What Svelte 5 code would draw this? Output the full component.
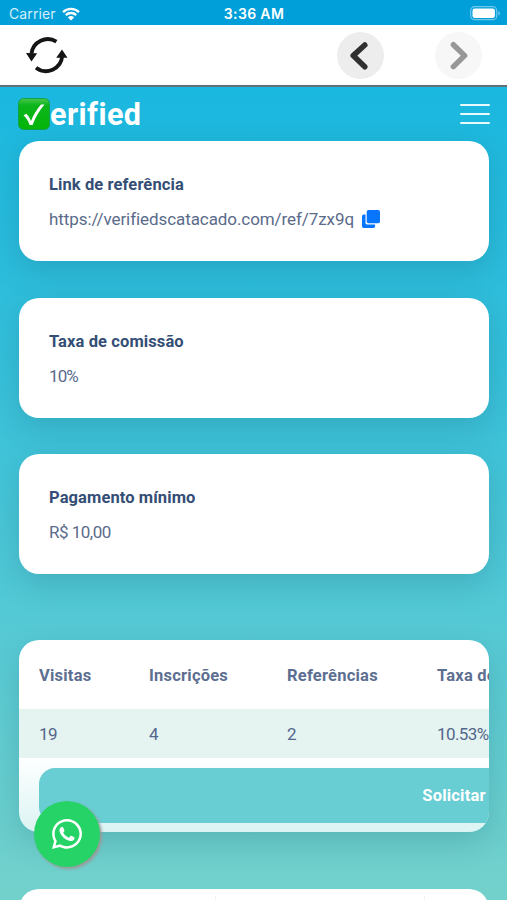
<script lang="ts">
  const cards = [
    { title: 'Link de referência', value: 'https://verifiedscatacado.com/ref/7zx9q', kind: 'link' },
    { title: 'Taxa de comissão', value: '10%', kind: 'rate' },
    { title: 'Pagamento mínimo', value: 'R$ 10,00', kind: 'money' }
  ];
  const columns = ['Visitas', 'Inscrições', 'Referências', 'Taxa de'];
  const stats = ['19', '4', '2', '10.53%'];
</script>

<div class="screen">
  <div class="status">
    <div class="carrier">
      <span>Carrier</span>
      <svg width="18" height="14" viewBox="0 0 18 14">
        <path d="M1 5.2a11.5 11.5 0 0 1 16 0M3.8 8.1a7.5 7.5 0 0 1 10.4 0" fill="none" stroke="#fff" stroke-width="2.3" />
        <path d="M5.9 10.4a4.4 4.4 0 0 1 6.2 0L9 13.6z" fill="#fff" />
      </svg>
    </div>
    <div class="time">3:36 AM</div>
    <svg class="battery" width="31" height="15" viewBox="0 0 31 15">
      <rect x=".7" y=".7" width="26" height="13" rx="3.8" fill="none" stroke="#71c7eb" stroke-width="1.2" />
      <rect x="2.5" y="2.5" width="22.4" height="9.4" rx="2.2" fill="#fff" />
      <path d="M28.3 5v4.5q1.6-.6 1.6-2.25T28.3 5z" fill="#71c7eb" />
    </svg>
  </div>

  <div class="toolbar">
    <button class="reload" aria-label="Recarregar">
      <svg width="42" height="38" viewBox="0 0 42 38">
        <path d="M30.400 5.600A16.400 16.400 0 0 0 5.500 17.500" fill="none" stroke="#151515" stroke-width="3.8" />
        <path d="M10 31.800A16.400 16.400 0 0 0 36.200 20" fill="none" stroke="#151515" stroke-width="3.8" />
        <path d="M0 16.900l11.200.3-5.700 8.300zM41.500 21.800l-11.300-.1 5.800-8.300z" fill="#151515" />
      </svg>
    </button>
    <button class="nav" aria-label="Voltar">
      <svg width="47" height="47" viewBox="0 0 47 47"><path d="M27.800 13L16.200 23.600l11.600 11.200" /></svg>
    </button>
    <button class="nav off" aria-label="Avançar">
      <svg width="47" height="47" viewBox="0 0 47 47"><path d="M18.400 12.700l11.200 10.900-11.200 11" /></svg>
    </button>
  </div>

  <main>
    <header>
      <div class="brand">
        <svg width="32" height="32" viewBox="0 0 32 32">
          <defs>
            <linearGradient id="tick-bg" x1="0" y1="0" x2="0" y2="1">
              <stop offset="0" stop-color="#4bc74f" />
              <stop offset=".22" stop-color="#0cb51b" />
              <stop offset="1" stop-color="#03b50a" />
            </linearGradient>
          </defs>
          <rect x=".5" y=".5" width="31" height="31" rx="5" fill="url(#tick-bg)" stroke="#12a04b" />
          <path d="M5.500 17.200l3-1.400c1.900 2.100 3.300 4.500 4.500 7.100C15.300 17 18.900 11.400 23 6.500h3.500C21.300 12.500 17.300 19.500 14.600 27h-3c-1.200-3.800-3.100-7-6.100-9.800z" fill="#fff" />
        </svg>
        <span>erified</span>
      </div>
      <div class="menu"><i></i><i></i><i></i></div>
    </header>

    {#each cards as card}
      <section class="card">
        <h3>{card.title}</h3>
        <p class={card.kind}>
          <span>{card.value}</span>
          {#if card.kind === 'link'}
            <svg width="18" height="18" viewBox="0 0 18 18" fill="#0875ff">
              <rect x="4.700" y="0" width="13.300" height="13.300" rx="1.700" />
              <path d="M3.500 4.500H1.700Q0 4.500 0 6.200v10Q0 18 1.700 18h9.700q1.700 0 1.700-1.800v-1.700H5.200q-1.700 0-1.700-1.700z" />
            </svg>
          {/if}
        </p>
      </section>
    {/each}

    <section class="table">
      <div class="row head">
        {#each columns as c}<span>{c}</span>{/each}
      </div>
      <div class="row body">
        {#each stats as s}<span>{s}</span>{/each}
      </div>
      <div class="action"><button>Solicitar</button></div>
    </section>

    <section class="next"><i></i><i></i></section>
  </main>

  <a class="whatsapp" href="#whatsapp" aria-label="WhatsApp">
    <svg width="30" height="30" viewBox="0 0 448 448" fill="#fff">
      <path d="M380.900 65.100C339 23.100 283.200 0 223.900 0 101.500 0 1.900 99.600 1.900 222c0 39.100 10.200 77.300 29.600 111L0 448l117.700-30.900c32.400 17.700 68.900 27 106.100 27h.1c122.300 0 224.100-99.600 224.100-222 0-59.300-25.200-115-67.100-157zM223.900 406.700c-33.200 0-65.700-8.900-94-25.700l-6.700-4-69.800 18.300L72 327.200l-4.400-7c-18.500-29.400-28.200-63.300-28.200-98.200 0-101.700 82.800-184.500 184.600-184.500 49.300 0 95.600 19.200 130.400 54.100 34.800 34.900 56.200 81.200 56.100 130.500 0 101.800-84.900 184.600-186.600 184.600z" />
      <path d="M325.100 268.500c-5.500-2.800-32.800-16.200-37.900-18-5.100-1.900-8.800-2.800-12.500 2.800-3.700 5.600-14.300 18-17.600 21.800-3.200 3.700-6.500 4.200-12 1.400-32.600-16.300-54-29.100-75.500-66-5.700-9.800 5.700-9.100 16.300-30.300 1.800-3.700.9-6.900-.5-9.700-1.400-2.800-12.500-30.100-17.100-41.200-4.500-10.800-9.100-9.300-12.500-9.500-3.200-.2-6.900-.2-10.600-.2-3.700 0-9.700 1.400-14.800 6.900-5.100 5.600-19.400 19-19.400 46.300 0 27.300 19.900 53.700 22.600 57.400 2.800 3.700 39.100 59.700 94.800 83.800 35.200 15.200 49 16.500 66.600 13.900 10.700-1.600 32.800-13.400 37.400-26.400 4.600-13 4.600-24.100 3.200-26.400-1.300-2.500-5-3.900-10.500-6.600z" />
    </svg>
  </a>
</div>

<style>
  :global(body) { margin: 0; overflow: hidden; }
  .screen { height: 900px; overflow: hidden; display: flex; flex-direction: column; position: relative; font-family: Roboto, sans-serif; font-variant-ligatures: none; color: #344e75; }
  .screen * { box-sizing: border-box; }
  button { border: 0; padding: 0; background: none; font: inherit; }
  svg { display: block; }

  .status { height: 25px; flex: none; display: grid; grid-template-columns: 1fr auto 1fr; align-items: center; padding: 2px 6px 0 9px; background: #009fda; color: #fff; font-family: Inter, sans-serif; font-size: 14px; }
  .carrier { display: flex; align-items: center; gap: 6px; color: #d5effa; letter-spacing: .12px; }
  .time { font-weight: 600; letter-spacing: .35px; margin-right: 2px; }
  .battery { justify-self: end; }

  .toolbar { height: 62px; flex: none; display: flex; align-items: center; padding: 0 25px 0 26px; background: #fff; border-bottom: 2px solid #5f7078; }
  .reload { margin-right: auto; }
  .nav { border-radius: 50%; background: #ededed; }
  .nav path { fill: none; stroke: #303030; stroke-width: 5.5; stroke-linecap: round; stroke-linejoin: round; }
  .nav.off { margin-left: 51px; background: #f7f7f7; }
  .nav.off path { stroke: #979797; }

  main { flex: 1; min-height: 0; padding: 0 18px 0 19px; background: linear-gradient(#1ab7df, #36c0da 35%, #54c9d5 65%, #73d1cb); }
  header { height: 54px; display: flex; justify-content: space-between; align-items: center; margin: 0 -1px; }
  .brand { display: flex; align-items: center; color: #fff; font-size: 30.5px; font-weight: 700; letter-spacing: .45px; }
  .menu { width: 30px; display: grid; gap: 6.5px; }
  .menu i { height: 2.2px; background: #e9faff; border-radius: 1px; }

  .card { height: 120px; margin-bottom: 36.5px; padding: 32px 30px; border-radius: 20px; background: #fff; box-shadow: 0 10px 30px rgba(20, 75, 95, .2); }
  h3 { margin: 0; font-size: 16.5px; line-height: 24px; font-weight: 700; letter-spacing: .1px; }
  p { margin: 10px 0 0; display: flex; align-items: center; gap: 8px; font-size: 17px; line-height: 24px; color: #5a6b8a; }
  .link { letter-spacing: -.08px; }
  .rate { letter-spacing: -.9px; }
  .money { letter-spacing: -.5px; }

  .table { height: 192px; margin-top: 66px; border-radius: 20px; overflow: hidden; background: linear-gradient(#fff 60%, #dbf4f3); box-shadow: 0 10px 30px rgba(20, 75, 95, .2); }
  .row { width: 830px; display: grid; grid-template-columns: 110px 138px 150px 1fr; padding-left: 20px; align-items: center; font-size: 17px; }
  .head { height: 69px; padding-top: 2px; font-weight: 700; color: #5d6f91; font-size: 16.5px; letter-spacing: .22px; }
  .body { height: 49px; background: #e5f4f1; color: #53678b; letter-spacing: -.6px; }
  .action { padding: 10px 0 0 20px; }
  .action button { display: block; width: 830px; height: 55px; border-radius: 16px; background: #69cdd4; color: #fff; font-size: 16.5px; font-weight: 700; letter-spacing: .2px; }
  .next { height: 100px; margin-top: 57px; padding: 7px 64px 0 196px; border-radius: 20px; background: #fff; display: flex; justify-content: space-between; }
  .next i { width: 1px; background: #eef2f4; }

  .whatsapp { position: absolute; left: 34px; top: 801px; width: 66px; height: 66px; border-radius: 50%; display: grid; place-items: center; background: #25d366; box-shadow: 2px 2px 3px #999; }
</style>
